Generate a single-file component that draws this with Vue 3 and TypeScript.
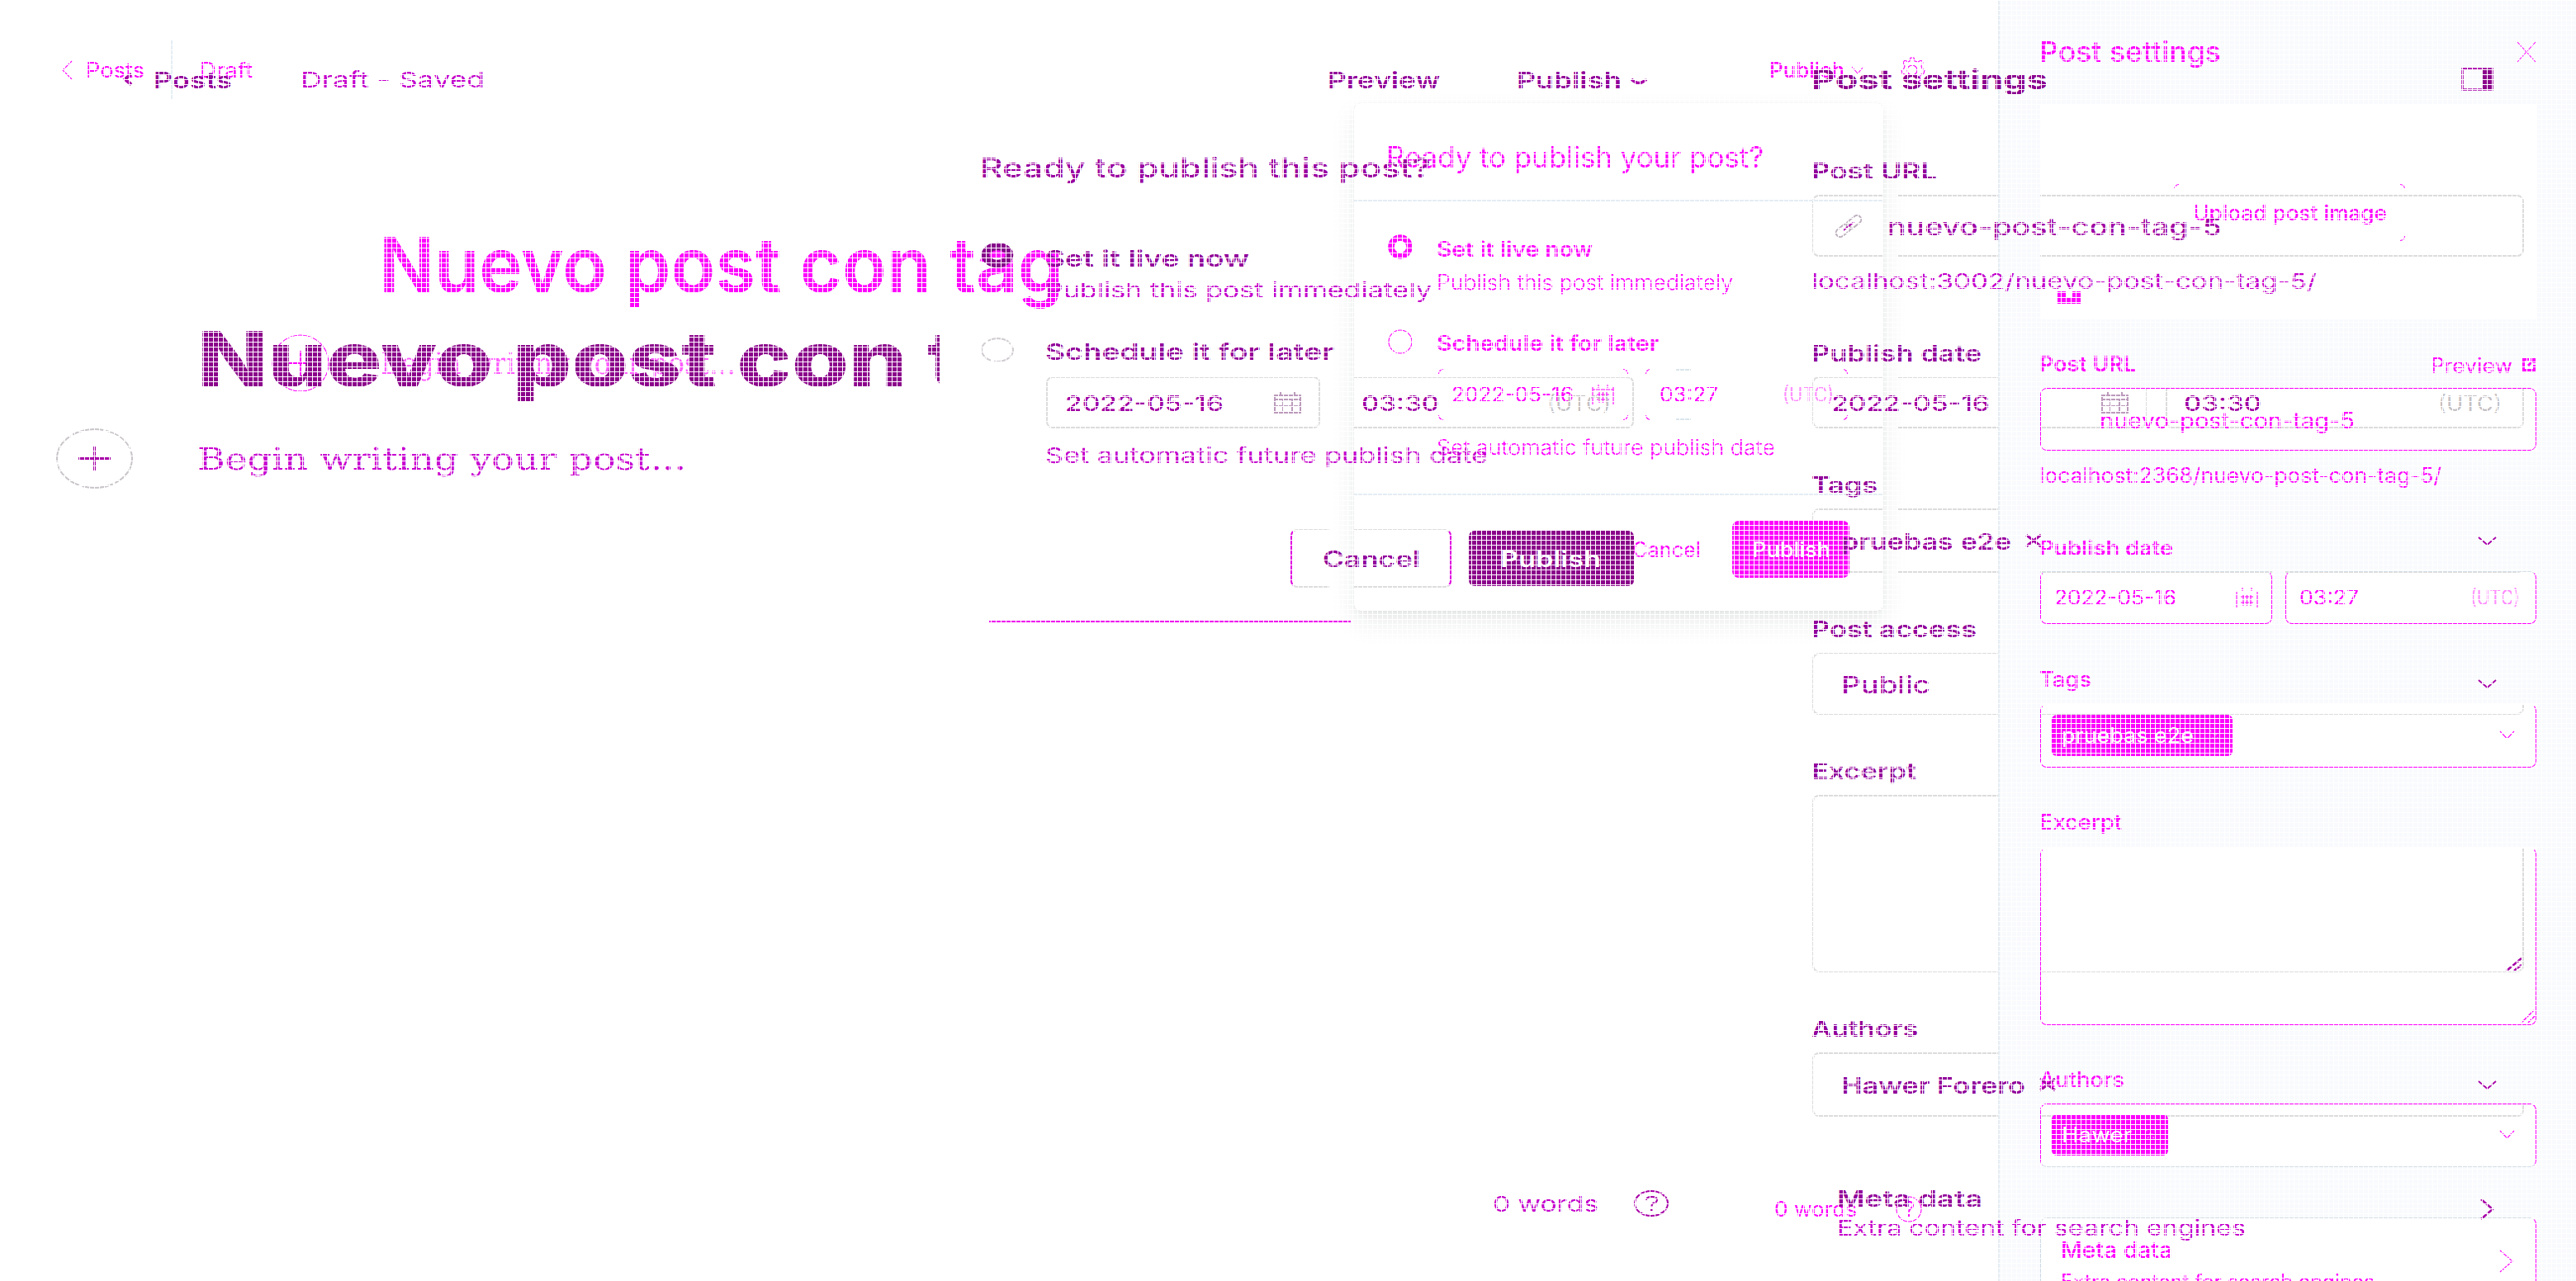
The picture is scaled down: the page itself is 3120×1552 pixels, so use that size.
<script setup lang="ts">
// Stretches a line of text horizontally so that it takes the given width.
const vFit = {
  mounted(el: HTMLElement, binding: { value: number }) {
    const natural = el.getBoundingClientRect().width
    el.style.transform = `scaleX(${binding.value / natural})`
    el.style.marginRight = `${binding.value - natural}px`
  },
}
</script>

<template>
  <div class="diff">
    <!-- first revision -->
    <div class="page old">
      <div class="main">
        <div class="topbar">
          <svg class="ic back" viewBox="0 0 12 16"><path d="M10 1.5 2.5 8l7.500 6.500" stroke-width="4" /></svg>
          <span v-fit="95" class="t b posts">Posts</span>
          <span v-fit="223" class="t r status">Draft - Saved</span>
          <span v-fit="136" class="t b preview">Preview</span>
          <span v-fit="127" class="t b publish">Publish</span>
          <svg class="ic caret" viewBox="0 0 22 10"><path d="M2 2q9 9 18 0" stroke-width="3.500" /></svg>
        </div>
        <div class="title">
          <span v-fit="860" class="t">Nuevo post con</span>
          <span v-fit="200" class="t rest">tag</span>
        </div>
        <div class="body">
          <svg class="ic plus" viewBox="0 0 93 73"><ellipse cx="46.500" cy="36.500" rx="45.500" ry="35.500" stroke="#c9c5c9" stroke-width="2" stroke-dasharray="38 3" /><path d="M27 36.500h39M46.500 22v30" stroke-width="3" /></svg>
          <span v-fit="592" class="t serif">Begin writing your post...</span>
        </div>
        <div class="foot">
          <span v-fit="128" class="t r">0 words</span>
          <svg class="ic help" viewBox="0 0 42 32"><ellipse cx="21" cy="16" rx="20" ry="15" stroke-width="2" /><path d="M15 12q0-4 6.500-4t6.500 3.500q0 3-4 4-2.500 1-2.500 4" stroke-width="2" /><path d="M21 22v3" stroke-width="3" /></svg>
        </div>
      </div>

      <div class="side">
        <div class="head">
          <span v-fit="286" class="t h">Post settings</span>
          <svg class="ic split" viewBox="0 0 39 28"><path d="M1.500 1.500h36v25h-36z" stroke-width="2.500" /><path d="M26 1h12v26H26z" fill="#8b008b" stroke="none" /></svg>
        </div>
        <div class="label url"><span v-fit="152" class="t b">Post URL</span></div>
        <div class="box field">
          <svg class="ic link" viewBox="0 0 34 28"><g transform="rotate(-38 17 14)" stroke="#bdb0bd" stroke-width="2"><rect x="-1" y="9" width="20" height="10" rx="5" /><rect x="15" y="9" width="20" height="10" rx="5" /><path d="M9 14h16" stroke="#b000b0" /></g></svg>
          <span v-fit="405" class="t m big slug">nuevo-post-con-tag-5</span>
        </div>
        <div class="label host"><span v-fit="612" class="t r">localhost:3002/nuevo-post-con-tag-5/</span></div>
        <div class="label"><span v-fit="206" class="t b">Publish date</span></div>
        <div class="dates">
          <div class="box date">
            <span v-fit="192" class="t m">2022-05-16</span>
            <svg class="ic cal" viewBox="0 0 33 26"><path d="M1 4h31v21H1zM1 9h31M1 17h31M11 9v16M22 9v16M8 0v6M25 0v6" /></svg>
          </div>
          <div class="box time"><span v-fit="94" class="t m">03:30</span><span v-fit="77" class="t utc">(UTC)</span></div>
        </div>
        <div class="label"><span v-fit="80" class="t b">Tags</span></div>
        <div class="box select">
          <span v-fit="206" class="t m5">pruebas e2e</span>
          <svg class="ic x" viewBox="0 0 22 16"><path d="M2 1l18 14M20 1 2 15" stroke-width="3" /></svg>
          <svg class="ic down" viewBox="0 0 23 11"><path d="M1 1l10.500 9L22 1" stroke-width="1.800" /></svg>
        </div>
        <div class="label"><span v-fit="200" class="t b">Post access</span></div>
        <div class="box access">
          <span v-fit="108" class="t m big">Public</span>
          <svg class="ic down" viewBox="0 0 23 11"><path d="M1 1l10.500 9L22 1" stroke-width="1.800" /></svg>
        </div>
        <div class="label"><span v-fit="127" class="t b">Excerpt</span></div>
        <div class="box area">
          <svg class="ic grip" viewBox="0 0 20 16"><path d="M1 16 19 1M10 16l9-7" stroke-width="2.500" /></svg>
        </div>
        <div class="label"><span v-fit="129" class="t b">Authors</span></div>
        <div class="box select">
          <span v-fit="223" class="t b">Hawer Forero</span>
          <svg class="ic x" viewBox="0 0 22 16"><path d="M2 1l18 14M20 1 2 15" stroke-width="3" /></svg>
          <svg class="ic down" viewBox="0 0 23 11"><path d="M1 1l10.500 9L22 1" stroke-width="1.800" /></svg>
        </div>
        <div class="label meta">
          <span v-fit="176" class="t b">Meta data</span>
          <svg class="ic next" viewBox="0 0 18 26"><path d="M2 1l14 12L2 25" stroke-width="2.500" /></svg>
        </div>
        <div class="label extra"><span v-fit="495" class="t r">Extra content for search engines</span></div>
      </div>

      <div class="dialog">
        <div class="line q"><span v-fit="546" class="t head-t">Ready to publish this post?</span></div>
        <div class="line live">
          <svg class="ic radio" viewBox="0 0 40 30"><ellipse cx="20" cy="15" rx="14.500" ry="10.500" stroke-width="9.500" /></svg>
          <span v-fit="247" class="t b">Set it live now</span>
        </div>
        <div class="line in tight"><span v-fit="468" class="t r">Publish this post immediately</span></div>
        <div class="line later">
          <svg class="ic radio" viewBox="0 0 40 30"><ellipse cx="20" cy="15" rx="19" ry="14" stroke="#d0ccd0" stroke-width="2" stroke-dasharray="30 3" /></svg>
          <span v-fit="350" class="t b">Schedule it for later</span>
        </div>
        <div class="dates in">
          <div class="box date">
            <span v-fit="192" class="t m">2022-05-16</span>
            <svg class="ic cal" viewBox="0 0 33 26"><path d="M1 4h31v21H1zM1 9h31M1 17h31M11 9v16M22 9v16M8 0v6M25 0v6" /></svg>
          </div>
          <div class="box time"><span v-fit="94" class="t m">03:30</span><span v-fit="77" class="t utc">(UTC)</span></div>
        </div>
        <div class="line in auto"><span v-fit="536" class="t r">Set automatic future publish date</span></div>
        <div class="buttons">
          <div class="cancel"><span v-fit="118" class="t b">Cancel</span></div>
          <div class="go"><span v-fit="122" class="t b">Publish</span></div>
        </div>
        <div class="edge"></div>
      </div>
    </div>

    <!-- second revision -->
    <div class="page new">
      <div class="main">
        <div class="topbar">
          <svg class="ic back" viewBox="0 0 13 24"><path d="M12 1 1 12l11 11" /></svg>
          <span v-fit="71" class="t r posts">Posts</span>
          <div class="rule"></div>
          <span v-fit="64" class="t r status">Draft</span>
          <span v-fit="91" class="t m5 publish">Publish</span>
          <svg class="ic caret" viewBox="0 0 16 10"><path d="M1 1l7 8 7-8" /></svg>
          <svg class="ic gear" viewBox="0 0 32 32"><path d="M13 5l1-4h4l1 4 4 1 4-2 2 3-2 4 1 3 3 2-1 4-3 1-2 3 1 4-4 3-3-3h-4l-3 3-4-3 1-4-2-3-3-1-1-4 3-2 1-3-2-4 2-3 4 2z" /><circle cx="16" cy="16" r="6" /></svg>
        </div>
        <div class="title"><span v-fit="829" class="t">Nuevo post con tag</span></div>
        <div class="body">
          <svg class="ic plus" viewBox="0 0 70 70"><circle cx="35" cy="35" r="34" /><path d="M21 35h28M35 20v30" stroke-width="2" /></svg>
          <span v-fit="430" class="t serif">Begin writing your post...</span>
        </div>
        <div class="foot">
          <span v-fit="100" class="t r">0 words</span>
          <svg class="ic help" viewBox="0 0 32 32"><circle cx="16" cy="16" r="15" /><path d="M11 12q0-5 5-5t5 4q0 3-3 4.500-2 1-2 4M16 22v3" stroke-width="2" /></svg>
        </div>
      </div>

      <div class="panel">
        <div class="fill f-head">
          <span v-fit="220" class="t h">Post settings</span>
          <svg class="ic close" viewBox="0 0 24 24"><path d="M1 0l22 24M23 0 1 24" /></svg>
        </div>
        <div class="hole upload">
          <div class="up-btn"><span v-fit="235" class="t m5">Upload post image</span><i class="c tl"></i><i class="c tr"></i><i class="c br"></i></div>
          <svg class="ic unsplash" viewBox="0 0 28 15"><path d="M0 0h10v7h8V0h10v15H0z" fill="#f0f" stroke="none" /></svg>
        </div>
        <div class="fill f-url">
          <span v-fit="117" class="t b">Post URL</span>
          <span v-fit="99" class="t r pv">Preview</span>
          <svg class="ic ext" viewBox="0 0 16 16"><path d="M8 1.500H1.500v13h13V8M7 9l7-7M10 1.500h4.500V6" stroke-width="3" /></svg>
        </div>
        <div class="hole h76"><div class="fbox slug"><span v-fit="309" class="t r big">nuevo-post-con-tag-5</span></div></div>
        <div class="fill f-host">
          <div class="line"><span v-fit="487" class="t r">localhost:2368/nuevo-post-con-tag-5/</span></div>
          <div class="line"><span v-fit="162" class="t b">Publish date</span></div>
        </div>
        <div class="hole h64">
          <div class="fbox pale-top date">
            <span v-fit="148" class="t r">2022-05-16</span>
            <svg class="ic cal" viewBox="0 0 27 25"><path d="M1 5v19M26 5v19M6 11h15M6 18h15M9 8v14M18 8v14M8 0v4M19 0v4M13.500 8v14" /></svg>
          </div>
          <div class="mid"></div>
          <div class="fbox pale-top time"><span v-fit="72" class="t r">03:27</span><span v-fit="60" class="t utc">(UTC)</span></div>
        </div>
        <div class="fill f-lbl"><span v-fit="63" class="t m5">Tags</span></div>
        <div class="hole h77">
          <div class="fbox no-top chips">
            <div class="chip tag"><span v-fit="160" class="t r">pruebas e2e</span><svg class="ic cx" viewBox="0 0 14 14"><path d="M1 1l12 12M13 1 1 13" stroke="#ff9cff" stroke-dasharray="2 4" /></svg></div>
            <svg class="ic sm" viewBox="0 0 19 11"><path d="M1 1l8.500 9L18 1" /></svg>
          </div>
        </div>
        <div class="fill f-lbl"><span v-fit="100" class="t m5">Excerpt</span></div>
        <div class="hole h215">
          <div class="fbox no-top area"><svg class="ic grip" viewBox="0 0 18 18"><path d="M1 16 16 1M9 16l8-8" stroke-width="1.500" /></svg></div>
        </div>
        <div class="fill f-lbl f-auth"><span v-fit="103" class="t m5">Authors</span></div>
        <div class="hole h77">
          <div class="fbox pale-bottom chips">
            <div class="chip who"><span v-fit="85" class="t r">Hawer</span><svg class="ic cx" viewBox="0 0 14 14"><path d="M1 1l12 12M13 1 1 13" stroke="#ff9cff" stroke-dasharray="2 4" /></svg></div>
            <svg class="ic sm" viewBox="0 0 19 11"><path d="M1 1l8.500 9L18 1" /></svg>
          </div>
        </div>
        <div class="fill f-gap"></div>
        <div class="hole h77">
          <div class="fbox pale-left metabox">
            <div>
              <div class="line"><span v-fit="135" class="t m5 big">Meta data</span></div>
              <div class="line"><span v-fit="380" class="t r">Extra content for search engines</span></div>
            </div>
            <svg class="ic next" viewBox="0 0 17 28"><path d="M1 1l15 13L1 27" /></svg>
          </div>
        </div>
      </div>

      <div class="modal-wrap">
        <div class="modal">
          <div class="m-head"><span v-fit="457" class="t">Ready to publish your post?</span></div>
          <div class="m-body">
            <div class="line">
              <svg class="ic radio up" viewBox="0 0 30 30"><circle cx="15" cy="15" r="11" stroke-width="7.500" /></svg>
              <span v-fit="189" class="t b">Set it live now</span>
            </div>
            <div class="line in"><span v-fit="359" class="t r light">Publish this post immediately</span></div>
            <div class="line later">
              <svg class="ic radio" viewBox="0 0 30 30"><circle cx="15" cy="15" r="14" /></svg>
              <span v-fit="269" class="t b">Schedule it for later</span>
            </div>
            <div class="m-dates">
              <div class="mbox date">
                <span v-fit="148" class="t r">2022-05-16</span>
                <svg class="ic cal" viewBox="0 0 27 25"><path d="M1 2v22M26 2v22M1 6h25M6 12h15M6 18h15M9 8v14M18 8v14M8 0v4M19 0v4M13.500 8v14" /></svg>
                <i class="c tl"></i><i class="c tr"></i><i class="c bl"></i><i class="c br"></i>
              </div>
              <div class="mbox time">
                <span v-fit="71" class="t r">03:27</span><span v-fit="62" class="t utc">(UTC)</span>
                <i class="c tl"></i><i class="c tr"></i><i class="c bl"></i><i class="c br"></i>
              </div>
            </div>
            <div class="line in auto"><span v-fit="410" class="t r light">Set automatic future publish date</span></div>
          </div>
          <div class="m-foot">
            <span v-fit="83" class="t r">Cancel</span>
            <div class="m-go"><span v-fit="95" class="t m5">Publish</span></div>
          </div>
        </div>
      </div>
    </div>

    <div class="mesh"></div>
  </div>
</template>

<style>
html, body { margin: 0; background: #fff; overflow: hidden; }
</style>

<style scoped>
.diff { position: relative; width: 3120px; height: 1552px; overflow: hidden; background: #fff; font-family: Inter, "Liberation Sans", sans-serif; font-size: 25.500px; line-height: 40px; }
.diff * { box-sizing: border-box; }
.page { position: absolute; inset: 0; display: flex; }
.new { z-index: 2; }
.t { display: block; flex: none; white-space: pre; transform-origin: 0 50%; }
.ic { display: block; flex: none; fill: none; overflow: visible; }
.mesh { position: absolute; inset: 0; z-index: 10; background-image: repeating-linear-gradient(90deg, #fff 0 1px, transparent 1px 6px), repeating-linear-gradient(180deg, #fff 0 1px, transparent 1px 6px); }
.line { display: flex; align-items: center; height: 40px; }
.serif { font-family: "DejaVu Serif", "Liberation Serif", serif; font-size: 38px; }

/* first revision */
.old .t, .old .ic { position: relative; z-index: 3; }
.old .t { color: #a800ac; left: -1px; top: 1px; }
.old .ic { stroke: #a800a8; stroke-width: 2; }
.old .t.b { font-size: 26.500px; font-weight: 600; color: #92009a; }
.old .t.m { color: #a000a4; font-weight: 500; }
.old .t.m5 { font-size: 26.500px; font-weight: 600; color: #9a00a0; }
.old .t.r { font-size: 26px; color: #c400cc; }
.old .t.big { font-size: 28px; }
.old .t.utc { color: #c4c0c4; }
.old .main { width: 2195px; flex: none; }
.old .topbar { display: flex; align-items: center; height: 40px; margin-top: 76px; padding-left: 149px; }
.old .topbar .t { left: 0; }
.old .back { width: 12px; height: 16px; }
.old .posts { margin-left: 25px; }
.old .status { margin-left: 83px; }
.old .preview { margin-left: 1021px; }
.old .publish { margin-left: 93px; }
.old .caret { width: 22px; height: 10px; margin-left: 10px; top: 3px; }
.old .title { display: flex; align-items: center; width: 898px; height: 110px; margin: 264px 0 0 240px; overflow: hidden; font-size: 92px; font-weight: 800; line-height: 110px; }
.old .title .t { color: #8b008b; top: 0; }
.old .rest { margin-left: 24px; }
.old .body { display: flex; align-items: center; height: 74px; margin-top: 28px; padding-left: 68px; }
.old .plus { width: 93px; height: 73px; }
.old .serif { margin-left: 79px; color: #c800d0; }
.old .foot { display: flex; align-items: center; height: 40px; margin-top: 846px; padding-left: 1809px; }
.old .help { width: 42px; height: 32px; margin-left: 42px; }

.side { width: 862px; flex: none; }
.head { display: flex; align-items: center; justify-content: space-between; height: 40px; margin-top: 76px; padding-right: 37px; }
.old .t.h { font-size: 32px; font-weight: 700; color: #8b008f; }
.split { width: 39px; height: 28px; }
.label { display: flex; align-items: center; height: 40px; margin-top: 47px; }
.label.url { margin-top: 70px; }
.label.host { margin-top: 9px; }
.box { display: flex; align-items: center; border: 2px solid #dcdcdc; border-radius: 8px; margin-top: 10px; height: 75px; }
.link { width: 34px; height: 28px; margin-left: 25px; }
.slug { margin-left: 31px; }
.dates { display: flex; height: 63px; margin-top: 9px; }
.dates .box { height: 63px; margin: 0; }
.side .date { width: 405px; padding: 0 20px 0 22px; justify-content: space-between; }
.side .time { width: 434px; margin-left: 23px; padding: 0 24px 0 21px; justify-content: space-between; }
.old .cal { width: 33px; height: 26px; stroke: #bb9abb; }
.select { height: 78px; padding-left: 34px; }
.x { width: 22px; height: 16px; margin-left: 15px; }
.select .down, .access .down { width: 23px; height: 11px; margin-left: auto; margin-right: 31px; }
.access { padding-left: 34px; }
.area { height: 215px; align-items: flex-end; justify-content: flex-end; }
.old .grip { width: 20px; height: 16px; }
.label.meta { margin-top: 78px; padding-left: 31px; }
.label.meta .next { width: 18px; height: 26px; margin-left: auto; margin-right: 36px; top: 14px; }
.label.extra { margin-top: -4px; padding-left: 31px; }

.dialog { position: absolute; left: 1188px; top: 182px; width: 800px; }
.old .head-t { font-size: 33px; font-weight: 500; color: #9a00a0; }
.live { margin-top: 70px; }
.dialog .radio { width: 40px; height: 30px; margin-right: 39px; stroke: #86008a; top: -3px; }
.in { margin-left: 79px; }
.tight { margin-top: -1px; }
.old .later { margin-top: 34px; }
.old .later .radio { top: -1px; }
.dialog .dates { margin-top: 11px; }
.dialog .date { width: 332px; padding: 0 21px 0 22px; justify-content: space-between; }
.dialog .time { width: 358px; margin-left: 22px; padding: 0 25px 0 27px; justify-content: space-between; }
.auto { margin-top: 12px; }
.buttons { display: flex; align-items: center; height: 70px; margin-top: 70px; padding-left: 375px; }
.cancel { display: flex; align-items: center; width: 195px; height: 71px; padding-left: 38px; border: 2px solid #e000e0; border-top-color: #ddd; border-bottom-color: #ddd; border-radius: 8px; }
.go { position: relative; z-index: 3; display: flex; align-items: center; justify-content: center; width: 200px; height: 67px; margin-left: 21px; border-radius: 7px; background: #8b008b; }
.old .go .t { color: #fff; }
.edge { width: 438px; height: 2px; margin: 41px 0 0 10px; background: #ee00ee; }

/* second revision */
.new .t { color: #f0f; }
.new .ic { stroke: #f0f; stroke-width: 1.100; }
.new .t.b { font-weight: 600; }
.new .t.m5 { font-weight: 500; }
.new .t.big { font-size: 27px; }
.new .t.utc { color: #ff8cff; }
.new .main { width: 2420px; flex: none; }
.new .topbar { display: flex; align-items: center; height: 72px; margin-top: 49px; padding-left: 75px; }
.new .back { width: 13px; height: 24px; }
.new .posts { margin-left: 16px; }
.rule { width: 2px; height: 72px; margin-left: 32px; background: #e5eef5; }
.new .status { margin-left: 33px; }
.new .publish { margin-left: 1837px; }
.new .caret { width: 16px; height: 10px; margin-left: 8px; }
.gear { width: 32px; height: 32px; margin-left: 42px; }
.new .title { display: flex; align-items: center; height: 110px; margin: 145px 0 0 459px; font-size: 92px; font-weight: 600; line-height: 110px; }
.new .body { display: flex; align-items: center; height: 70px; margin-top: 29px; padding-left: 329px; }
.new .plus { width: 70px; height: 70px; }
.new .serif { margin-left: 62px; color: #ff5cff; }
.new .foot { display: flex; align-items: center; height: 40px; margin-top: 970px; padding-left: 2149px; }
.new .help { width: 32px; height: 32px; margin-left: 47px; }

.panel { width: 700px; height: 1552px; flex: none; overflow: hidden; border-left: 2px solid #e5edf4; }
.fill { display: flex; background: #f8fafd; padding: 0 48px 0 49px; }
.fill .t { position: relative; left: -1px; }
.f-head { height: 126px; align-items: center; justify-content: space-between; }
.new .t.h { font-size: 34px; font-weight: 500; }
.close { width: 24px; height: 24px; }
.hole { display: flex; border-left: 49px solid #f8fafd; border-right: 48px solid #f8fafd; }
.upload { flex-direction: column; height: 261px; }
.up-btn { position: relative; display: flex; align-items: center; justify-content: center; width: 280px; height: 69px; margin: 97px 0 0 162px; }
.c { position: absolute; width: 6px; height: 6px; border: 1px solid #f0f; }
.tl { left: 0; top: 0; border-width: 1px 0 0 1px; border-top-left-radius: 6px; }
.tr { right: 0; top: 0; border-width: 1px 1px 0 0; border-top-right-radius: 6px; }
.bl { left: 0; bottom: 0; border-width: 0 0 1px 1px; border-bottom-left-radius: 6px; }
.br { right: 0; bottom: 0; border-width: 0 1px 1px 0; border-bottom-right-radius: 6px; }
.unsplash { width: 28px; height: 15px; margin: 61px 0 0 21px; }
.f-url { height: 83px; padding-top: 34px; }
.pv { margin-left: 357px; padding-top: 2px; }
.ext { width: 16px; height: 16px; margin: 13px 0 0 11px; }
.h76 { height: 76px; }
.h64 { height: 65px; }
.h77 { height: 77px; }
.h215 { height: 215px; }
.fbox { display: flex; align-items: center; width: 601px; height: 100%; border: 1px solid #f0f; border-radius: 8px; }
.h64 .fbox { height: 64px; }
.pale-top { border-top-color: #d5dfe6; }
.no-top { border-top-color: #fff; }
.pale-bottom { border-bottom-color: #d5dfe6; }
.pale-left { border-left-color: #cddae4; border-top-color: #d5dfe6; }
.fbox.slug { margin: 0; padding: 3px 0 0 71px; }
.f-host { flex-direction: column; height: 146px; padding-top: 10px; }
.f-host .line + .line { margin-top: 48px; }
.fbox.date { width: 281px; padding: 0 16px 0 16px; justify-content: space-between; }
.fbox.time { width: 304px; padding: 0 19px 0 16px; justify-content: space-between; }
.mid { width: 16px; background: #f8fafd; }
.new .cal { width: 27px; height: 25px; }
.f-lbl { height: 97px; padding-top: 46px; }
.h64 + .f-lbl { height: 96px; }
.f-auth { height: 95px; }
.chips { padding: 0 25px 2px 13px; justify-content: space-between; }
.chip { display: flex; align-items: center; justify-content: space-between; height: 50px; padding: 0 14px 0 12px; border-radius: 6px; background: #f0f; }
.new .chip .t { color: #fff; }
.tag { width: 219px; }
.who { width: 141px; }
.cx { width: 14px; height: 14px; }
.sm { width: 19px; height: 11px; }
.fbox.area { align-items: flex-end; justify-content: flex-end; }
.new .grip { width: 18px; height: 18px; }
.f-gap { height: 61px; }
.metabox { height: 140px; align-items: flex-start; justify-content: space-between; padding: 19px 27px 0 24px; }
.metabox .line + .line { margin-top: -2px; }
.metabox .next { width: 17px; height: 28px; margin-top: 19px; }

.modal-wrap { position: absolute; left: 1610px; top: 125px; border-left: 30px solid #fff; border-right: 17px solid #fff; }
.modal { width: 641px; height: 615px; border-radius: 8px; box-shadow: 0 0 1px rgba(0, 0, 0, .16), 0 6px 8px rgba(20, 30, 35, .03), 0 14px 32px rgba(20, 30, 35, .09); }
.m-head { display: flex; align-items: center; height: 119px; padding: 13px 0 0 39px; border-bottom: 2px solid #e5edf4; font-size: 35px; }
.m-body { height: 356px; padding: 37px 0 0 41px; border-bottom: 2px solid #e5edf4; }
.modal .radio { width: 30px; height: 30px; margin-right: 30px; }
.modal .radio.up { margin-top: -5px; }
.modal .in { margin-left: 60px; }
.modal .later { margin-top: 34px; }
.modal .later .radio { margin-top: -3px; }
.modal .line .t { position: relative; left: -1px; top: 1px; }
.new .light { font-weight: 300; }
.m-dates { display: flex; height: 62px; margin: 12px 0 0 61px; }
.mbox { position: relative; display: flex; align-items: center; justify-content: space-between; }
.mbox.date { width: 230px; padding: 0 17px 0 16px; }
.mbox.time { width: 245px; margin-left: 21px; padding: 0 17px 0 17px; background: linear-gradient(#d9e5ec, #d9e5ec) 37px 0 / 18px 2px no-repeat, linear-gradient(#d9e5ec, #d9e5ec) 37px 100% / 18px 2px no-repeat; }
.m-foot { display: flex; align-items: center; padding-left: 337px; margin-top: 31px; }
.m-go { display: flex; align-items: center; justify-content: center; width: 142px; height: 69px; margin-left: 38px; border-radius: 8px; background: #f0f; }
.new .m-go .t { color: #fff; }
</style>
